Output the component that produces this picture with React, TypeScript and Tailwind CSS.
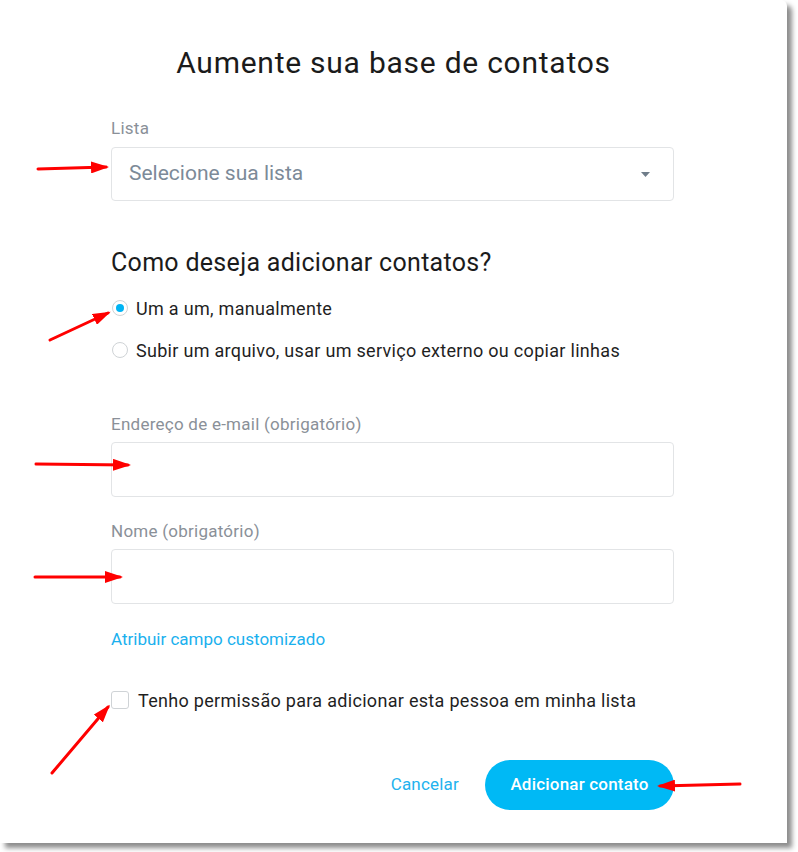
import React from "react";

// red annotation arrows drawn over the screenshot
const arrows = [
  { x1: 38, y1: 169, x2: 106, y2: 167 },
  { x1: 50, y1: 340, x2: 108, y2: 313 },
  { x1: 36, y1: 464, x2: 128, y2: 465 },
  { x1: 35, y1: 577, x2: 120, y2: 577 },
  { x1: 52, y1: 773, x2: 108, y2: 707 },
  { x1: 740, y1: 784, x2: 660, y2: 786 },
];

const Arrows = () => (
  <svg className="absolute inset-0 pointer-events-none" width={798} height={852}>
    <defs>
      <marker id="head" markerWidth="6" markerHeight="4" refX="5" refY="2" orient="auto" markerUnits="strokeWidth">
        <path d="M0,0 L6,2 L0,4 Z" fill="#f00" />
      </marker>
    </defs>
    {arrows.map((a, i) => (
      <line
        key={i}
        x1={a.x1}
        y1={a.y1}
        x2={a.x2}
        y2={a.y2}
        stroke="#f00"
        strokeWidth={3}
        strokeLinecap="round"
        markerEnd="url(#head)"
      />
    ))}
  </svg>
);

const Label = ({ children }: { children: React.ReactNode }) => (
  <div className="text-[17px] leading-[20px] tracking-[0.25px] text-[#8a9098]">{children}</div>
);

const TextBox = () => (
  <div className="mt-[8px] h-[55px] rounded-[4px] border border-[#e2e4e6] bg-white"></div>
);

export default function App() {
  return (
    <div className="relative w-[798px] h-[852px] bg-white font-['Roboto',sans-serif]">
      <div className="w-[787px] h-[843px] bg-white rounded-tr-[6px] shadow-[5px_5px_5px_rgba(0,0,0,0.45)] pt-[45px]">
        <h1 className="text-center text-[30px] leading-[36px] tracking-[0.025em] text-[#1b1b1b]">
          Aumente sua base de contatos
        </h1>

        <div className="w-[563px] ml-[111px]">
          <div className="mt-[37px]">
            <Label>Lista</Label>
            <div className="mt-[9px] h-[54px] rounded-[4px] border border-[#e2e4e6] flex items-center justify-between pl-[17px] pr-[23px]">
              <span className="text-[21px] text-[#7c8a98]">Selecione sua lista</span>
              <svg width="9" height="5" viewBox="0 0 9 5">
                <path d="M0 0 L9 0 L4.5 5 Z" fill="#6f7d8a" />
              </svg>
            </div>
          </div>

          <h2 className="mt-[47px] text-[25px] leading-[30px] tracking-[0.3px] text-[#1b1b1b]">
            Como deseja adicionar contatos?
          </h2>

          <div className="mt-[18px] flex flex-col gap-[18px] text-[18px] tracking-[0.3px] text-[#1f1f1f]">
            <div className="flex items-center gap-[8px] h-[24px]">
              <span className="ml-[1px] w-[16px] h-[16px] rounded-full border border-[#cfd3d6] flex items-center justify-center">
                <span className="w-[8px] h-[8px] rounded-full bg-[#00b4f4]"></span>
              </span>
              <span>Um a um, manualmente</span>
            </div>
            <div className="flex items-center gap-[8px] h-[24px]">
              <span className="ml-[1px] w-[16px] h-[16px] rounded-full border border-[#cfd3d6]"></span>
              <span>Subir um arquivo, usar um serviço externo ou copiar linhas</span>
            </div>
          </div>

          <div className="mt-[52px]">
            <Label>Endereço de e-mail (obrigatório)</Label>
            <TextBox />
          </div>

          <div className="mt-[24px]">
            <Label>Nome (obrigatório)</Label>
            <TextBox />
          </div>

          <div className="mt-[25px] text-[17px] leading-[20px] text-[#1ab0ee]">
            Atribuir campo customizado
          </div>

          <div className="mt-[39px] flex items-center gap-[9px] h-[24px] text-[18px] tracking-[0.3px] text-[#1f1f1f]">
            <span className="w-[18px] h-[18px] rounded-[3px] border border-[#cfd3d6] bg-white"></span>
            <span>Tenho permissão para adicionar esta pessoa em minha lista</span>
          </div>

          <div className="mt-[48px] flex items-center justify-end gap-[26px]">
            <button className="text-[17px] tracking-[0.2px] text-[#22b2ee]">Cancelar</button>
            <button className="h-[50px] w-[189px] rounded-full bg-[#00b9f5] text-white text-[17px] tracking-[0.2px] font-medium">
              Adicionar contato
            </button>
          </div>
        </div>
      </div>
      <Arrows />
    </div>
  );
}
